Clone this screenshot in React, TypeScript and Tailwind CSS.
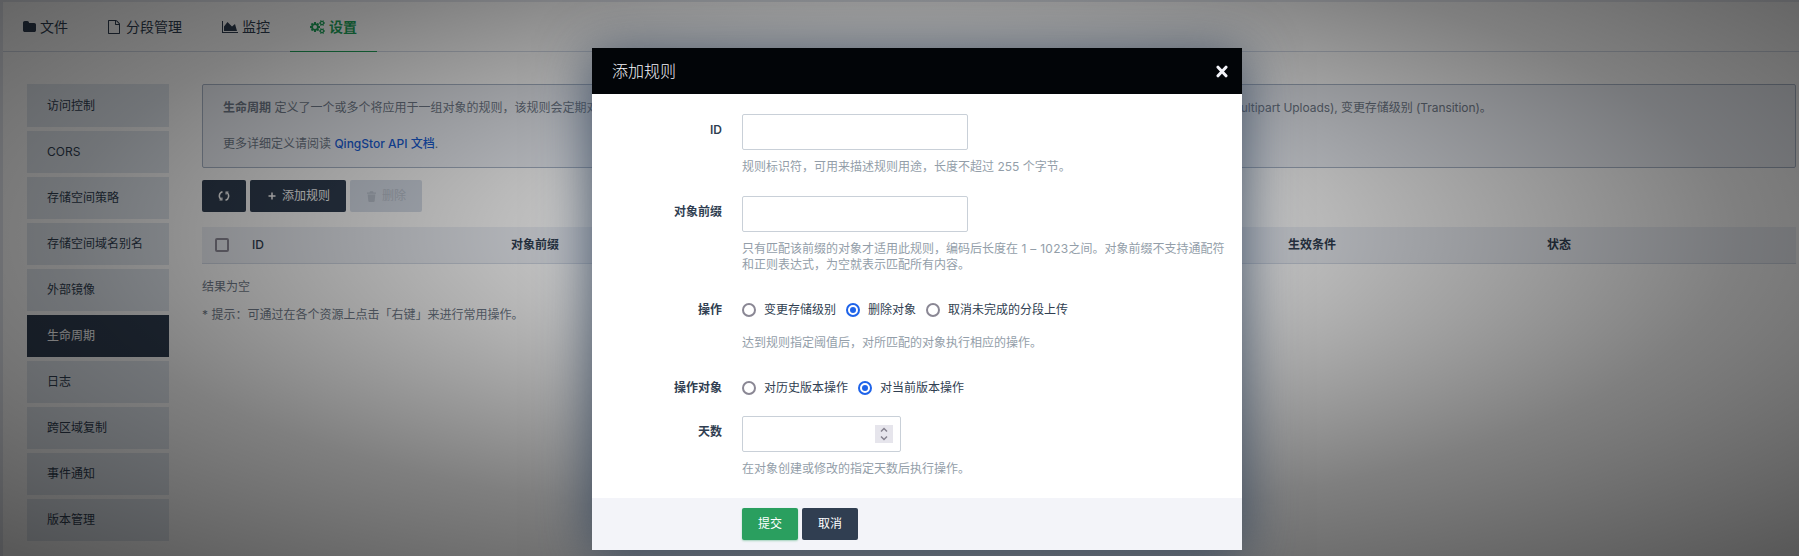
import React from "react";

const menu = ["访问控制", "CORS", "存储空间策略", "存储空间域名别名", "外部镜像", "生命周期", "日志", "跨区域复制", "事件通知", "版本管理"];

const FolderIcon = () => (
  <svg width="13" height="14" viewBox="64 0 1664 1792" fill="currentColor">
    <path d="M1728 608v704q0 92-66 158t-158 66h-1216q-92 0-158-66t-66-158v-960q0-92 66-158t158-66h320q92 0 158 66t66 158v32h672q92 0 158 66t66 158z" />
  </svg>
);
const FileIcon = () => (
  <svg width="12" height="14" viewBox="128 0 1536 1792" fill="currentColor">
    <path d="M1596 380q28 28 48 76t20 88v1152q0 40-28 68t-68 28h-1344q-40 0-68-28t-28-68v-1600q0-40 28-68t68-28h896q40 0 88 20t76 48zm-444-244v376h376q-10-29-22-41l-313-313q-12-12-41-22zm384 1528v-1024h-416q-40 0-68-28t-28-68v-416h-768v1536h1280z" />
  </svg>
);
const ChartIcon = () => (
  <svg width="16" height="14" viewBox="0 0 2048 1792" fill="currentColor">
    <path d="M2048 1536v128h-2048v-1536h128v1408h1920zm-384-1024l256 896h-1664v-576l448-576 576 576z" />
  </svg>
);
const SMALL_GEAR =
  "v140q0 16-149 31-12 27-30 52 51 113 51 138 0 4-4 7-122 71-124 71-8 0-46-47t-52-68q-20 2-30 2t-30-2q-14 21-52 68t-46 47q-2 0-124-71-4-3-4-7 0-25 51-138-18-25-30-52-149-15-149-31v-140q0-16 149-31 13-29 30-52-51-113-51-138 0-4 4-7 4-2 35-20t59-34 30-16q8 0 46 46.500t52 67.500q20-2 30-2t30 2q51-71 92-112l6-2q4 0 124 70 4 3 4 7 0 25-51 138 17 23 30 52 149 15 149 31z";
const BIG_GEAR =
  "M1280 805v185q0 10-7 19.500t-16 10.500l-155 24q-11 35-32 76 34 48 90 115 7 11 7 20 0 12-7 19-23 30-82.500 89.500t-78.500 59.500q-11 0-21-7l-115-90q-37 19-77 31-11 108-23 155-7 24-30 24h-186q-11 0-20-7.500t-10-17.500l-23-153q-34-10-75-31l-118 89q-7 7-20 7-11 0-21-8-144-133-144-160 0-9 7-19 10-14 41-53t47-61q-23-44-35-82l-152-24q-10-1-17-9.500t-7-19.500v-185q0-10 7-19.500t16-10.500l155-24q11-35 32-76-34-48-90-115-7-11-7-20 0-12 7-20 22-30 82-89t79-59q11 0 21 7l115 90q34-18 77-32 11-108 23-154 7-24 30-24h186q11 0 20 7.500t10 17.500l23 153q34 10 75 31l118-89q8-7 20-7 11 0 21 8 144 133 144 160 0 8-7 19-12 16-42 54t-45 60q23 48 34 82l152 23q10 2 17 10.500t7 19.500z";
const CogsIcon = () => (
  <svg width="15" height="14" viewBox="0 0 1920 1792" fill="currentColor" fillRule="evenodd">
    <path d={BIG_GEAR + "M896 896a256 256 0 1 0-512 0a256 256 0 1 0 512 0z"} />
    <path d={"M1920 1338" + SMALL_GEAR + "M1664 1408a128 128 0 1 0-256 0a128 128 0 1 0 256 0z"} />
    <path d={"M1920 314" + SMALL_GEAR + "M1664 384a128 128 0 1 0-256 0a128 128 0 1 0 256 0z"} />
  </svg>
);

const Tab = ({ icon, label, layout }: { icon: React.ReactNode; label: string; layout: string }) => (
  <div className={`flex h-[50px] items-center pl-5 text-sm text-[#303e51] ${layout}`}>
    {icon}
    <span>{label}</span>
  </div>
);

const Radio = ({ label, checked }: { label: string; checked?: boolean }) => (
  <label className="flex items-center text-[#303e51]">
    <span className={`mr-2 flex size-[14px] items-center justify-center rounded-full border-2 ${checked ? "border-[#1e63e9]" : "border-[#8a8794]"}`}>
      {checked && <span className="size-[6px] rounded-full bg-[#1e63e9]" />}
    </span>
    {label}
  </label>
);

const Label = ({ children }: { children: React.ReactNode }) => (
  <div className="w-[130px] shrink-0 pr-5 text-right font-bold text-[#303e51]">{children}</div>
);

export default function App() {
  return (
    <div className="relative h-[556px] w-[1799px] overflow-hidden bg-[#e6e9f0] pl-[3px] pt-[2px] font-['Inter','Noto_Sans_CJK_SC',sans-serif] text-xs leading-4 text-[#717b8a]">
      <div className="h-full bg-white">
        <nav className="flex h-[50px] border-b border-[#d3dae6]">
          <Tab icon={<FolderIcon />} label="文件" layout="w-[85px] gap-[4px]" />
          <Tab icon={<FileIcon />} label="分段管理" layout="w-[114px] gap-[6px]" />
          <Tab icon={<ChartIcon />} label="监控" layout="w-[88px] gap-[4px]" />
          <div className="flex h-[50px] w-[87px] items-center gap-[4px] border-b border-[#1f9e58] pl-5 text-sm font-bold text-[#1fa35b]">
            <CogsIcon />
            <span>设置</span>
          </div>
        </nav>
        <div className="flex pl-6 pt-8">
          <aside className="flex w-[142px] shrink-0 flex-col gap-1">
            {menu.map((m, i) => (
              <div key={m} className={`flex items-center pl-5 ${i === 0 ? "h-[43px] pt-px" : "h-[42px]"} ${m === "生命周期" ? "bg-[#2f3d50] text-white" : "bg-[#e2e8ef] text-[#303e51]"}`}>
                {m}
              </div>
            ))}
          </aside>
          <main className="ml-[33px] w-[1594px] shrink-0">
            <div className="h-[84px] rounded-xs border border-[#a9b5c7] bg-[#eef1f7] pl-5 pt-[14px] leading-[18px]">
              <div className="flex whitespace-nowrap">
                <div className="w-[1007px] overflow-hidden">
                  <b>生命周期</b> 定义了一个或多个将应用于一组对象的规则，该规则会定期对匹配的对象执行指定的操作。
                </div>
                <div className="tracking-[-0.06px]">Multipart Uploads), 变更存储级别 (Transition)。</div>
              </div>
              <div className="mt-[18px]">
                更多详细定义请阅读 <a className="font-medium text-[#1a5fd8]">QingStor API 文档</a>.
              </div>
            </div>
            <div className="mt-3 flex h-8 gap-1 text-white">
              <button className="flex w-11 items-center justify-center rounded-xs bg-[#303e51]">
                <svg width="12" height="12" viewBox="0 0 12 12" fill="none" stroke="currentColor" strokeWidth="1.500">
                  <path d="M4.500 1.800A4.300 4.300 0 0 0 3.200 9.500 M7.500 10.200A4.300 4.300 0 0 0 8.800 2.500" />
                  <path d="M1.500 10h2.400V7.400 M10.500 2H8.100v2.600" strokeWidth="1.200" />
                </svg>
              </button>
              <button className="flex w-24 items-center gap-[6px] rounded-xs bg-[#303e51] pl-[18px]">
                <svg width="8" height="8" viewBox="0 0 8 8" stroke="currentColor" strokeWidth="1.500"><path d="M4 .5v7M.5 4h7" /></svg>
                添加规则
              </button>
              <button className="flex w-[72px] items-center gap-[6px] rounded-xs bg-[#d7dee9] pl-[17px] text-[#bcc4d0]">
                <svg width="9" height="11" viewBox="0 0 9 11" fill="currentColor"><path d="M0 1.500h2.500L3 .3h3l.5 1.200H9v1.300H0z M.7 3.600h7.600L7.700 10c-.1.600-.5 1-1.100 1H2.400c-.6 0-1-.4-1.100-1z" /></svg>
                删除
              </button>
            </div>
            <div className="mt-[15px] flex h-[37px] items-center border-b border-[#d3dae6] bg-[#edf0f6] pl-[13px] font-bold text-[#303e51]">
              <span className="mr-[23px] size-[14px] rounded-xs border-2 border-[#8f8c99]" />
              <span className="w-[259px] font-medium">ID</span>
              <span className="w-[777px]">对象前缀</span>
              <span className="w-[259px]">生效条件</span>
              <span>状态</span>
            </div>
            <p className="mt-[15px]">结果为空</p>
            <p className="mt-3">* 提示：可通过在各个资源上点击「右键」来进行常用操作。</p>
          </main>
        </div>
      </div>

      <div className="absolute inset-0 flex bg-[radial-gradient(ellipse_1272px_440px_at_900px_235px,rgba(0,0,0,0.06)_0%,rgba(0,0,0,0.27)_32%,rgba(0,0,0,0.5)_66%,rgba(0,0,0,0.65)_100%)] pl-[592px] pt-12">
        <div className="flex h-[502px] w-[650px] flex-col bg-white shadow-[0_6px_50px_rgba(50,68,92,0.88)]">
          <header className="flex h-[46px] items-center justify-between bg-[#020508] pl-5 pr-[14px] text-base font-light text-[#f3f4f9]">
            添加规则
            <svg width="12" height="13" viewBox="0 0 12 13" stroke="currentColor" strokeWidth="3" strokeLinecap="round"><path d="M2 2.200l8 8.600M10 2.200l-8 8.600" /></svg>
          </header>
          <div className="h-[404px] pl-5 pt-5 text-[#939ea9]">
            <div className="flex h-[82px]">
              <div className="pt-2"><Label><span className="font-semibold">ID</span></Label></div>
              <div>
                <div className="h-9 w-[226px] rounded-xs border border-[#c9d0d8]" />
                <p className="mt-[9px]">规则标识符，可用来描述规则用途，长度不超过 255 个字节。</p>
              </div>
            </div>
            <div className="flex h-[106px]">
              <div className="pt-2"><Label>对象前缀</Label></div>
              <div>
                <div className="h-9 w-[226px] rounded-xs border border-[#c9d0d8]" />
                <p className="mt-[9px] whitespace-nowrap">只有匹配该前缀的对象才适用此规则，编码后长度在 <span className="tracking-[0.28px]">1 – 1023</span>之间。对象前缀不支持通配符<br />和正则表达式，为空就表示匹配所有内容。</p>
              </div>
            </div>
            <div className="flex h-[78px]">
              <Label>操作</Label>
              <div>
                <div className="flex h-4 gap-[10px]">
                  <Radio label="变更存储级别" />
                  <Radio label="删除对象" checked />
                  <Radio label="取消未完成的分段上传" />
                </div>
                <p className="mt-[17px]">达到规则指定阈值后，对所匹配的对象执行相应的操作。</p>
              </div>
            </div>
            <div className="flex h-9">
              <Label>操作对象</Label>
              <div className="flex h-4 gap-[10px]">
                <Radio label="对历史版本操作" />
                <Radio label="对当前版本操作" checked />
              </div>
            </div>
            <div className="flex">
              <div className="pt-2"><Label>天数</Label></div>
              <div>
                <div className="flex h-9 w-[159px] items-center justify-end rounded-xs border border-[#c9d0d8] pr-[7px]">
                  <span className="flex size-[18px] items-center justify-center bg-[#e6e5ec]">
                    <svg width="8" height="14" viewBox="0 0 8 14" fill="none" stroke="#85828f" strokeWidth="1.500"><path d="M1 4.500l3-3 3 3M1 9.500l3 3 3-3" /></svg>
                  </span>
                </div>
                <p className="mt-[9px]">在对象创建或修改的指定天数后执行操作。</p>
              </div>
            </div>
          </div>
          <footer className="flex h-[52px] items-center gap-1 bg-[#f3f4f9] pl-[150px] text-white">
            <button className="h-8 w-14 rounded-xs bg-[#2a9f5f] shadow-[0_1px_2px_rgba(42,159,95,0.4)]">提交</button>
            <button className="h-8 w-14 rounded-xs bg-[#303e51]">取消</button>
          </footer>
        </div>
      </div>
    </div>
  );
}
